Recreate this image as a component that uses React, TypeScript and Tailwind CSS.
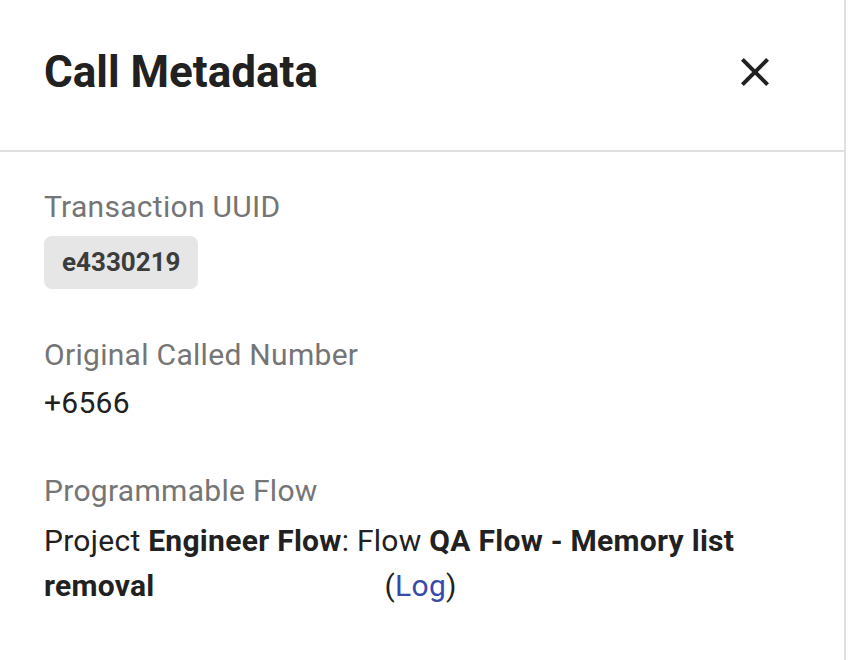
const labelCls = "text-[30px] leading-[45px] tracking-[0.3px] text-[#757575]";
const valueCls = "text-[30px] leading-[45px] tracking-[0.28px] text-[#212121]";

function CloseIcon() {
  return (
    <svg viewBox="0 0 24 24" className="w-[48px] h-[48px] fill-[#212121]">
      <path d="M19 6.41 17.59 5 12 10.59 6.41 5 5 6.41 10.59 12 5 17.59 6.41 19 12 13.41 17.59 19 19 17.59 13.41 12z" />
    </svg>
  );
}

export default function App() {
  return (
    <div className="w-[848px] h-[660px] bg-white font-['Roboto',sans-serif]">
      <div className="w-[846px] h-full border-r-2 border-[#e0e0e0] flex flex-col">
        {/* Header */}
        <div className="h-[152px] shrink-0 border-b-2 border-[#e0e0e0] flex items-center justify-between pl-[44px] pr-[65px] pb-[6px]">
          <h1 className="text-[44px] font-bold text-[#212121] leading-none">
            Call Metadata
          </h1>
          <button className="flex items-center justify-center">
            <CloseIcon />
          </button>
        </div>

        {/* Body */}
        <div className="flex flex-col gap-[43px] px-[44px] pt-[32px]">
          <div className="flex flex-col gap-[7px] items-start">
            <div className={labelCls}>Transaction UUID</div>
            <span className="h-[53px] px-[18px] rounded-[8px] bg-[#e6e6e6] text-[26px] font-bold text-[#3c3c3c] flex items-center">
              e4330219
            </span>
          </div>

          <div className="flex flex-col gap-[3px]">
            <div className={labelCls}>Original Called Number</div>
            <div className={valueCls}>+6566</div>
          </div>

          <div className="flex flex-col gap-[5px]">
            <div className={labelCls}>Programmable Flow</div>
            <div className={valueCls}>
              Project <span className="font-bold">Engineer Flow</span>: Flow{" "}
              <span className="font-bold">QA Flow - Memory list removal</span>
              <span className="inline-block w-[230px]" />
              (<a className="text-[#3949ab]">Log</a>)
            </div>
          </div>
        </div>
      </div>
    </div>
  );
}
